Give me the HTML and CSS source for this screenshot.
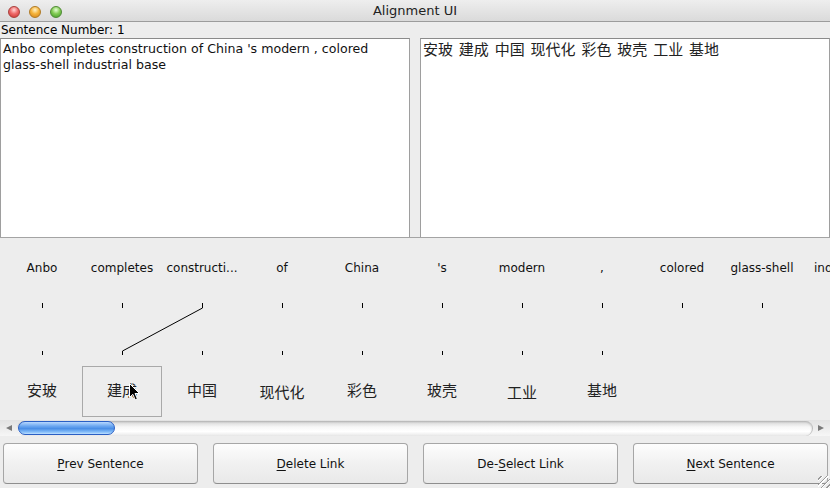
FILE: index.html
```html
<!DOCTYPE html>
<html>
<head>
<meta charset="utf-8">
<title>Alignment UI</title>
<link rel="stylesheet" href="styles.css">
</head>
<body>
<div class="window">
  <div class="titlebar">
    <div class="lights">
      <span class="light red"></span>
      <span class="light yellow"></span>
      <span class="light green"></span>
    </div>
    <div class="title">Alignment UI</div>
  </div>
  <div class="label">Sentence Number: 1</div>
  <div class="texts">
    <div class="area en">Anbo completes construction of China 's modern , colored glass&#8209;shell industrial base</div>
    <div class="area zh">安玻 建成 中国 现代化 彩色 玻壳 工业 基地</div>
  </div>
  <div class="align">
    <div class="row src">
      <div class="cell">Anbo</div>
      <div class="cell">completes</div>
      <div class="cell">constructi...</div>
      <div class="cell">of</div>
      <div class="cell">China</div>
      <div class="cell">'s</div>
      <div class="cell">modern</div>
      <div class="cell">,</div>
      <div class="cell">colored</div>
      <div class="cell">glass-shell</div>
      <div class="cell">industrial</div>
    </div>
    <svg class="links" width="830" height="90" viewBox="0 0 830 90">
      <g stroke="#000" stroke-width="1" fill="none" shape-rendering="crispEdges">
        <line x1="42.5" y1="27" x2="42.5" y2="32"/>
        <line x1="122.5" y1="27" x2="122.5" y2="32"/>
        <line x1="202.5" y1="27" x2="202.5" y2="32"/>
        <line x1="282.5" y1="27" x2="282.5" y2="32"/>
        <line x1="362.5" y1="27" x2="362.5" y2="32"/>
        <line x1="442.5" y1="27" x2="442.5" y2="32"/>
        <line x1="522.5" y1="27" x2="522.5" y2="32"/>
        <line x1="602.5" y1="27" x2="602.5" y2="32"/>
        <line x1="682.5" y1="27" x2="682.5" y2="32"/>
        <line x1="762.5" y1="27" x2="762.5" y2="32"/>
        <line x1="42.5" y1="75" x2="42.5" y2="79"/>
        <line x1="122.5" y1="75" x2="122.5" y2="79"/>
        <line x1="202.5" y1="75" x2="202.5" y2="79"/>
        <line x1="282.5" y1="75" x2="282.5" y2="79"/>
        <line x1="362.5" y1="75" x2="362.5" y2="79"/>
        <line x1="442.5" y1="75" x2="442.5" y2="79"/>
        <line x1="522.5" y1="75" x2="522.5" y2="79"/>
        <line x1="602.5" y1="75" x2="602.5" y2="79"/>
      </g>
      <line x1="202.5" y1="32" x2="122.5" y2="75" stroke="#000" stroke-width="1"/>
    </svg>
    <div class="row tgt">
      <div class="tcell">安玻</div>
      <div class="tcell sel">建成</div>
      <div class="tcell">中国</div>
      <div class="tcell low">现代化</div>
      <div class="tcell">彩色</div>
      <div class="tcell">玻壳</div>
      <div class="tcell low">工业</div>
      <div class="tcell">基地</div>
    </div>
    <svg class="cursor" width="12" height="18" viewBox="0 0 12 18">
      <path d="M0.5 0.5 L0.5 14.5 L3.8 11.3 L6.2 16.8 L8.4 15.8 L6 10.5 L10.5 10.5 Z" fill="#000" stroke="#fff" stroke-width="1" stroke-linejoin="round"/>
    </svg>
  </div>
  <div class="hscroll">
    <div class="arrow left"></div>
    <div class="track">
      <div class="thumb"></div>
    </div>
    <div class="arrow right"></div>
  </div>
  <div class="buttons">
    <div class="btn"><u>P</u>rev Sentence</div>
    <div class="btn"><u>D</u>elete Link</div>
    <div class="btn">De-<u>S</u>elect Link</div>
    <div class="btn"><u>N</u>ext Sentence</div>
  </div>
  <div class="grip"></div>
</div>
</body>
</html>
```

FILE: styles.css
```css
html, body {
  margin: 0;
  padding: 0;
}
body {
  font-family: "DejaVu Sans", "Noto Sans CJK SC", sans-serif;
  font-size: 12px;
  color: #111;
}
.window {
  position: relative;
  width: 830px;
  height: 488px;
  background: #ededed;
  overflow: hidden;
}
.titlebar {
  position: relative;
  height: 21px;
  border-bottom: 1px solid #9c9c9c;
  background: linear-gradient(#eeeeee, #dadada);
  display: flex;
  align-items: center;
  justify-content: center;
}
.lights {
  position: absolute;
  left: 8px;
  top: 6px;
  display: flex;
  gap: 9px;
}
.light {
  width: 12px;
  height: 12px;
  border-radius: 50%;
  box-sizing: border-box;
}
.red {
  background: radial-gradient(circle at 50% 30%, #ffd6d6 0, #ef6b6b 45%, #c9302c 100%);
  border: 1px solid #a8403c;
}
.yellow {
  background: radial-gradient(circle at 50% 30%, #fff2c8 0, #f5b43c 45%, #d2801a 100%);
  border: 1px solid #b07a24;
}
.green {
  background: radial-gradient(circle at 50% 30%, #e6ffd6 0, #84cc55 45%, #3e9a25 100%);
  border: 1px solid #4f8a34;
}
.title {
  font-size: 13px;
  color: #222;
  line-height: 22px;
}
.label {
  height: 16px;
  line-height: 16px;
  padding-left: 1px;
  color: #000;
}
.texts {
  display: grid;
  grid-template-columns: 410px 410px;
  column-gap: 10px;
  height: 199px;
}
.area {
  background: #fff;
  border: 1px solid #9e9e9e;
  border-top-color: #8a8a8a;
  border-bottom: none;
  padding: 1px 2px;
  line-height: 16px;
  color: #000;
}
.area.en {
  font-size: 12.6px;
  padding-top: 2px;
  color: #111;
}
.area.zh {
  font-family: "Noto Sans CJK SC", sans-serif;
  font-size: 15px;
  line-height: 17px;
  word-spacing: 2.5px;
  padding-top: 1px;
  color: #222;
}
.align {
  position: relative;
  height: 182px;
  border-top: 1px solid #a4a4a4;
  padding-left: 2px;
  overflow: hidden;
}
.row {
  display: flex;
}
.src {
  margin-top: 22px;
  height: 16px;
}
.cell {
  flex: 0 0 80px;
  text-align: center;
  line-height: 16px;
  white-space: nowrap;
  color: #111;
}
.links {
  display: block;
  margin-left: -2px;
}
.tgt {
  height: 51px;
}
.tcell {
  flex: 0 0 80px;
  box-sizing: border-box;
  border: 1px solid transparent;
  padding-bottom: 4px;
  display: flex;
  align-items: center;
  justify-content: center;
  font-family: "Noto Sans CJK SC", sans-serif;
  font-size: 15px;
  color: #222;
}
.tcell.low {
  padding-bottom: 0;
}
.tcell.sel {
  border-color: #a9a9a9;
}
.cursor {
  position: absolute;
  left: 129px;
  top: 145px;
}
.hscroll {
  height: 16px;
  display: flex;
  align-items: center;
  background: linear-gradient(#e2e2e2, #f6f6f6);
}
.arrow {
  flex: 0 0 17px;
  height: 16px;
  position: relative;
}
.arrow.left::after {
  content: "";
  position: absolute;
  left: 6px;
  top: 5px;
  border-right: 6px solid #7a7a7a;
  border-top: 3px solid transparent;
  border-bottom: 3px solid transparent;
}
.arrow.right::after {
  content: "";
  position: absolute;
  left: 5px;
  top: 5px;
  border-left: 6px solid #7a7a7a;
  border-top: 3px solid transparent;
  border-bottom: 3px solid transparent;
}
.track {
  flex: 1;
  height: 15px;
  border-radius: 8px;
  background: linear-gradient(#d4d4d4, #f7f7f7 40%, #ffffff 70%, #e8e8e8);
  box-shadow: inset 0 1px 2px rgba(0,0,0,0.18);
  border-right: 1px solid #bdbdbd;
  display: flex;
  align-items: center;
}
.thumb {
  width: 97px;
  height: 14px;
  margin-left: 1px;
  box-sizing: border-box;
  border-radius: 7px;
  border: 1px solid #2a5fc4;
  background: linear-gradient(#b8d8ff 0, #6aa6f0 35%, #4a8ee6 55%, #88c0fa 85%, #bfe0ff 100%);
}
.buttons {
  display: flex;
  gap: 15px;
  padding: 7px 3px 0;
}
.btn {
  flex: 0 0 195px;
  height: 41px;
  box-sizing: border-box;
  border: 1px solid #a6a6a6;
  border-bottom-color: #8e8e8e;
  border-radius: 4px;
  background: linear-gradient(#fdfdfd, #f1f1f1 50%, #e9e9e9);
  display: flex;
  align-items: center;
  justify-content: center;
  padding-top: 1px;
  font-size: 12px;
  color: #111;
}
.btn u {
  text-decoration-thickness: 1px;
  text-underline-offset: 2px;
}
.grip {
  position: absolute;
  right: 0;
  bottom: 0;
  width: 12px;
  height: 12px;
  background: repeating-linear-gradient(135deg, transparent 0 2px, #9a9a9a 2px 3px, #ffffff 3px 4px);
}
```
